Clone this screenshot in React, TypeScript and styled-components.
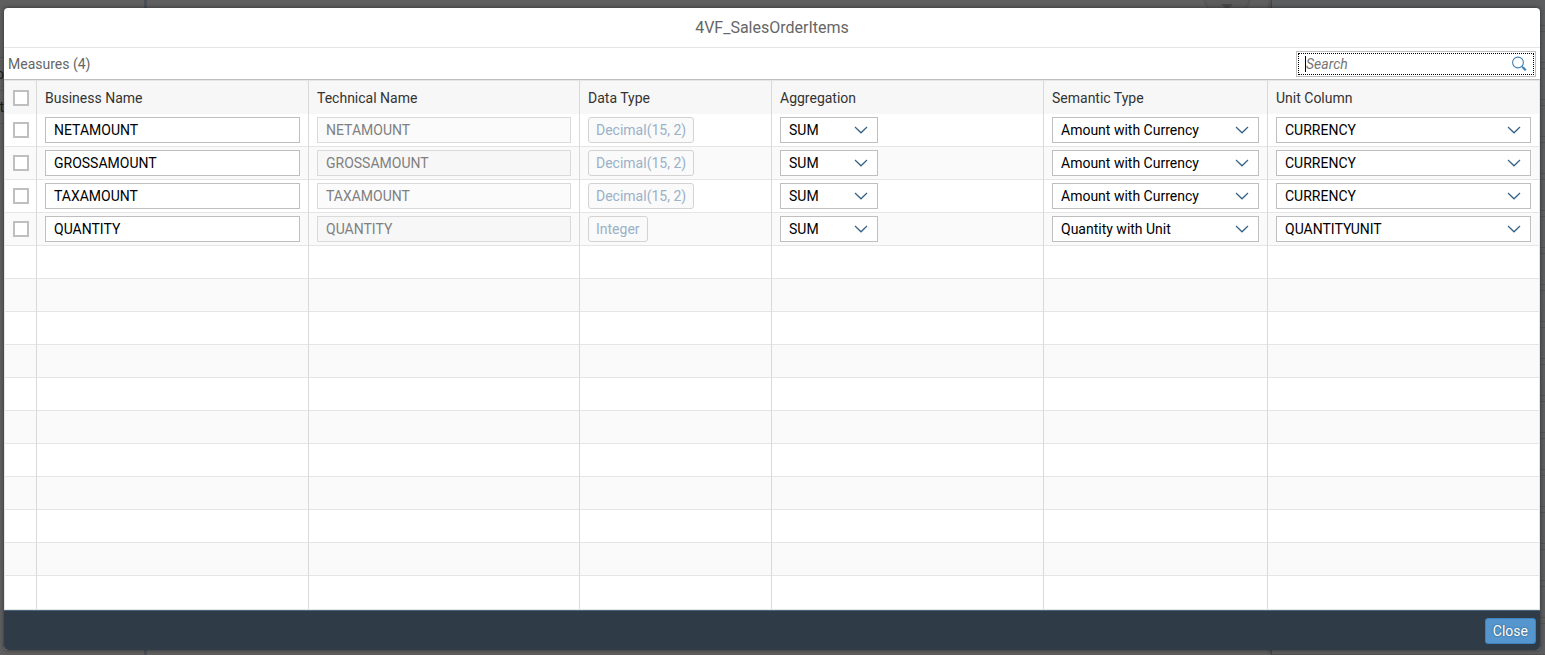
import React from "react";
import styled, { createGlobalStyle, css } from "styled-components";

const Global = createGlobalStyle`
  * { box-sizing: border-box; }
  body { margin: 0; background: #5f5f5f; font-family: Roboto, "Liberation Sans", sans-serif; font-size: 14px; color: #333; }
  button, input, select { font: inherit; }
`;

const Backdrop = styled.div`
  position: relative;
  display: flex;
  min-height: 100vh;
  padding: 8px 5px 5px 4px;
  background: #5f5f5f;
  overflow: hidden;
`;

const Behind = styled.div`
  position: absolute;
  inset: 0;
  display: flex;
`;

const SideList = styled.div`
  width: 147px;
  padding-top: 25px;
  border-right: 3px solid #4b5058;
`;

const SideItem = styled.div`
  height: 33px;
  border-bottom: 1px solid #545454;
  color: #1c1c1c;
  line-height: 32px;
`;

const SideText = styled.div`
  display: flex;
  justify-content: flex-end;
  width: 4px;
  overflow: hidden;
`;

const Canvas = styled.div`
  display: flex;
  flex: 1;
  align-items: flex-start;
  justify-content: flex-end;
  padding-right: 20px;
`;

const SidePanel = styled.div`
  width: 274px;
  border-left: 1px solid #454545;
  box-shadow: -1px 0 4px rgba(0, 0, 0, 0.25);
  background: repeating-linear-gradient(to bottom, #5c5d5e 0 25px, #525252 25px 26px, #5c5d5e 26px 31px, #525252 31px 32px, #5c5d5e 32px 37px);
`;

const Dialog = styled.section`
  position: relative;
  display: flex;
  flex: 1;
  flex-direction: column;
  min-width: 0;
  overflow: hidden;
  border-radius: 4px;
  background: #fff;
  box-shadow: 0 0 4px rgba(0, 0, 0, 0.5);
`;

const Header = styled.header`
  display: flex;
  align-items: center;
  justify-content: center;
  height: 40px;
  border-bottom: 1px solid #e5e5e5;
`;

const Title = styled.h1`
  margin: 0;
  color: #666;
  font-size: 16px;
  font-weight: 400;
  line-height: 20px;
`;

const Toolbar = styled.div`
  display: flex;
  align-items: center;
  justify-content: space-between;
  height: 32px;
  padding: 0 4px;
  border-bottom: 1px solid #bfbfbf;
`;

const TableTitle = styled.h2`
  margin: 0;
  color: #666;
  font-size: 14px;
  font-weight: 400;
`;

const SearchBox = styled.label`
  display: flex;
  align-items: center;
  width: 240px;
  height: 26px;
  padding: 1px;
  border: 1px solid #bfbfbf;
`;

const SearchFocus = styled.span`
  display: flex;
  flex: 1;
  align-items: center;
  height: 22px;
  padding: 0 6px;
  border: 1px dotted #000;
`;

const Caret = styled.span`
  width: 1px;
  height: 16px;
  background: #000;
`;

const SearchInput = styled.input`
  flex: 1;
  min-width: 0;
  padding: 0;
  border: 0;
  outline: 0;
  background: transparent;
  &::placeholder { color: #757575; font-style: italic; opacity: 1; }
`;

const Table = styled.table`
  width: 100%;
  border-collapse: separate;
  border-spacing: 0;
  border: 1px solid #e5e5e5;
  table-layout: fixed;
`;

const Column = styled.col<{ $width: number }>`
  width: ${(p) => p.$width}px;
`;

const cell = css`
  height: 33px;
  padding: 0 8px;
  border-right: 1px solid #d9d9d9;
  text-align: left;
  vertical-align: middle;
  &:first-child { padding: 0; text-align: center; }
  &:last-child { border-right: 0; }
`;

const HeadCell = styled.th`
  ${cell}
  background: #f7f7f7;
  font-weight: 400;
`;

const Cell = styled.td`
  ${cell}
  border-bottom: 1px solid #e5e5e5;
`;

const Row = styled.tr`
  &:nth-child(even) { background: #fafafa; }
  &:last-child td { border-bottom: 0; }
`;

const CheckBox = styled.input`
  display: block;
  width: 16px;
  height: 16px;
  margin: 0 auto;
  appearance: none;
  border: 2px solid #bfbfbf;
  background: #fff;
`;

const TextField = styled.input`
  display: block;
  width: 100%;
  height: 26px;
  padding: 0 8px;
  border: 1px solid #bfbfbf;
  border-radius: 0;
  background: #fff;
  color: #000;
  &:disabled { border-color: #dadada; background: rgba(237, 237, 237, 0.2); color: #808080; }
`;

const TypeButton = styled.button`
  display: block;
  height: 26px;
  padding: 0 7px;
  border: 1px solid #d3d3d3;
  border-radius: 3px;
  background: #fafafa;
  color: #9ab1c7;
`;

const SelectFrame = styled.div<{ $width?: number }>`
  display: grid;
  align-items: center;
  width: ${(p) => (p.$width ? `${p.$width}px` : "100%")};
  height: 26px;
  border: 1px solid #bfbfbf;
  background: #fff;
  & > * { grid-area: 1 / 1; }
  & > svg { justify-self: end; margin-right: 9px; pointer-events: none; }
`;

const Select = styled.select`
  width: 100%;
  height: 24px;
  padding: 0 32px 0 8px;
  appearance: none;
  border: 0;
  background: transparent;
  color: #000;
`;

const Footer = styled.footer`
  display: flex;
  flex: 1;
  align-items: center;
  justify-content: flex-end;
  min-height: 40px;
  padding: 0 4px;
  border-top: 1px solid #48647e;
  background: #2f3c48;
`;

const CloseButton = styled.button`
  height: 26px;
  padding: 0 7px;
  border: 1px solid #3e84c0;
  border-radius: 3px;
  background: #5496cd;
  color: #fff;
  text-shadow: 0 0 2px rgba(0, 0, 0, 0.5);
`;

const Chevron = () => (
  <svg width="14" height="8" viewBox="0 0 14 8" fill="none" stroke="#346187" strokeWidth="1.2" aria-hidden="true">
    <path d="M1 1l6 5.8L13 1" />
  </svg>
);

const Magnifier = () => (
  <svg width="16" height="16" viewBox="0 0 16 16" fill="none" stroke="#3f80b5" aria-hidden="true">
    <circle cx="7" cy="6.5" r="5.4" strokeWidth="1.1" />
    <path d="M10.8 10.3l1.6 1.6" strokeWidth="1.2" />
    <path d="M11.8 11.3l3 3" strokeWidth="2.2" />
  </svg>
);

const DropHandle = () => (
  <svg width="48" height="20" viewBox="0 0 48 20" aria-hidden="true">
    <circle cx="24" cy="-5" r="23" fill="#5c5c5c" stroke="#555" strokeWidth="2" />
    <path d="M18 4h12l-6 6z" fill="#484848" />
  </svg>
);

interface SelectProps { label: string; value: string; options: string[]; width?: number }

const DropDown = ({ label, value, options, width }: SelectProps) => (
  <SelectFrame $width={width}>
    <Select aria-label={label} defaultValue={value}>
      {options.map((o) => <option key={o}>{o}</option>)}
    </Select>
    <Chevron />
  </SelectFrame>
);

const columns = [
  { name: "Business Name", width: 272 },
  { name: "Technical Name", width: 271 },
  { name: "Data Type", width: 192 },
  { name: "Aggregation", width: 272 },
  { name: "Semantic Type", width: 224 },
  { name: "Unit Column", width: 271 },
];

const measures = [
  { name: "NETAMOUNT", type: "Decimal(15, 2)", semantic: "Amount with Currency", unit: "CURRENCY" },
  { name: "GROSSAMOUNT", type: "Decimal(15, 2)", semantic: "Amount with Currency", unit: "CURRENCY" },
  { name: "TAXAMOUNT", type: "Decimal(15, 2)", semantic: "Amount with Currency", unit: "CURRENCY" },
  { name: "QUANTITY", type: "Integer", semantic: "Quantity with Unit", unit: "QUANTITYUNIT" },
];

const emptyRows = Array.from({ length: 11 }, (_, i) => i);

export default function App() {
  return (
    <>
      <Global />
      <Backdrop>
        <Behind aria-hidden="true">
          <SideList>
            <SideItem />
            <SideItem><SideText>o</SideText></SideItem>
            <SideItem><SideText>t</SideText></SideItem>
          </SideList>
          <Canvas><DropHandle /></Canvas>
          <SidePanel />
        </Behind>
        <Dialog role="dialog" aria-labelledby="dialog-title">
          <Header><Title id="dialog-title">4VF_SalesOrderItems</Title></Header>
          <Toolbar>
            <TableTitle>Measures (4)</TableTitle>
            <SearchBox>
              <SearchFocus>
                <Caret />
                <SearchInput type="text" placeholder="Search" aria-label="Search" />
                <Magnifier />
              </SearchFocus>
            </SearchBox>
          </Toolbar>
          <Table>
            <colgroup>
              <Column $width={32} />
              {columns.map((c) => <Column key={c.name} $width={c.width} />)}
            </colgroup>
            <thead>
              <tr>
                <HeadCell><CheckBox type="checkbox" aria-label="Select all" /></HeadCell>
                {columns.map((c) => <HeadCell key={c.name} scope="col">{c.name}</HeadCell>)}
              </tr>
            </thead>
            <tbody>
              {measures.map((m) => (
                <Row key={m.name}>
                  <Cell><CheckBox type="checkbox" aria-label={`Select ${m.name}`} /></Cell>
                  <Cell><TextField aria-label="Business Name" defaultValue={m.name} /></Cell>
                  <Cell><TextField aria-label="Technical Name" defaultValue={m.name} disabled /></Cell>
                  <Cell><TypeButton type="button" disabled>{m.type}</TypeButton></Cell>
                  <Cell><DropDown label="Aggregation" value="SUM" options={["SUM"]} width={98} /></Cell>
                  <Cell><DropDown label="Semantic Type" value={m.semantic} options={["Amount with Currency", "Quantity with Unit"]} /></Cell>
                  <Cell><DropDown label="Unit Column" value={m.unit} options={["CURRENCY", "QUANTITYUNIT"]} /></Cell>
                </Row>
              ))}
              {emptyRows.map((r) => (
                <Row key={r}>
                  <Cell />
                  {columns.map((c) => <Cell key={c.name} />)}
                </Row>
              ))}
            </tbody>
          </Table>
          <Footer><CloseButton type="button">Close</CloseButton></Footer>
        </Dialog>
      </Backdrop>
    </>
  );
}
